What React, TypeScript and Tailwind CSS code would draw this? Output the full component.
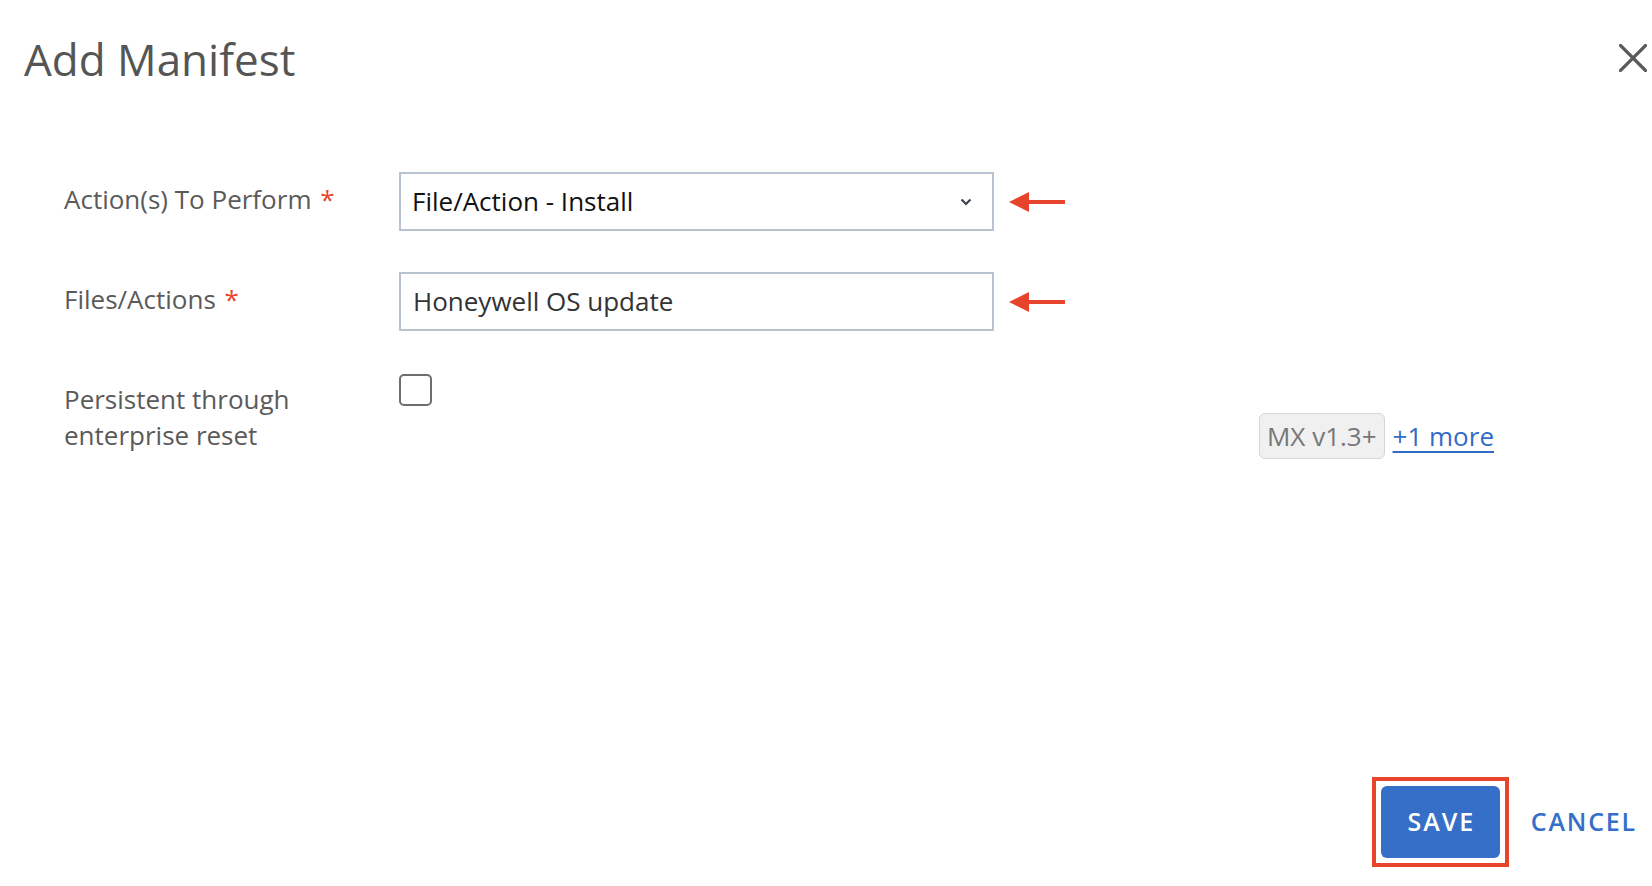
import React from "react";

function RedArrow() {
  return (
    <svg width="56" height="20" viewBox="0 0 56 20" className="shrink-0">
      <polygon points="0,10 20,0 20,20" fill="#e8432b" />
      <rect x="18" y="8" width="38" height="4" fill="#e8432b" />
    </svg>
  );
}

export default function App() {
  return (
    <div
      className="relative flex h-[886px] w-[1652px] flex-col overflow-hidden bg-white"
      style={{ fontFamily: '"Open Sans", "Noto Sans", sans-serif' }}
    >
      {/* Header */}
      <div className="flex items-start justify-between pl-[24px] pr-[5px] pt-[29px]">
        <h1 className="text-[44px] leading-[60px] font-normal text-[#555555]">Add Manifest</h1>
        <button className="mt-[15px] flex h-[28px] w-[28px] items-center justify-center" aria-label="Close">
          <svg width="28" height="28" viewBox="0 0 28 28">
            <path d="M1.5 1.5 L26.5 26.5 M26.5 1.5 L1.5 26.5" stroke="#5a5a5a" strokeWidth="3.2" strokeLinecap="square" />
          </svg>
        </button>
      </div>

      {/* Form */}
      <div className="mt-[83px] flex flex-col pl-[64px]">
        {/* Row 1 */}
        <div className="flex items-center">
          <div className="w-[335px] pb-[5px] text-[26px] leading-[36px] text-[#5a5a5a]">
            Action(s) To Perform <span className="ml-[2px] text-[#e8432b]">*</span>
          </div>
          <div className="flex h-[59px] w-[595px] items-center justify-between border-2 border-[#b9c3cf] pl-[11px] pr-[20px]">
            <span className="text-[26px] text-[#111111]">File/Action - Install</span>
            <svg width="12" height="8" viewBox="0 0 12 8">
              <path d="M1.5 1.5 L6 6 L10.5 1.5" stroke="#3d4450" strokeWidth="2.2" fill="none" />
            </svg>
          </div>
          <div className="ml-[15px]">
            <RedArrow />
          </div>
        </div>

        {/* Row 2 */}
        <div className="mt-[41px] flex items-center">
          <div className="w-[335px] pb-[5px] text-[26px] leading-[36px] text-[#5a5a5a]">
            Files/Actions <span className="ml-[2px] text-[#e8432b]">*</span>
          </div>
          <div className="flex h-[59px] w-[595px] items-center border-2 border-[#b9c3cf] pl-[12px]">
            <span className="text-[26px] text-[#333333]">Honeywell OS update</span>
          </div>
          <div className="ml-[15px]">
            <RedArrow />
          </div>
        </div>

        {/* Row 3 */}
        <div className="mt-[43px] flex items-start">
          <div className="mt-[7px] w-[335px] text-[26px] leading-[36px] text-[#5a5a5a]">
            Persistent through
            <br />
            enterprise reset
          </div>
          <div className="h-[32px] w-[33px] rounded-[5px] border-2 border-[#6e6e6e]" />
          <div className="ml-auto mr-[158px] mt-[39px] flex items-center gap-[8px]">
            <span className="rounded-[6px] border border-[#d6d6d6] bg-[#f0f0f0] px-[7px] text-[26px] leading-[44px] text-[#777777]">
              MX v1.3+
            </span>
            <a href="#" className="text-[26px] leading-[44px] text-[#2f6cc6] underline underline-offset-[5px]">
              +1 more
            </a>
          </div>
        </div>
      </div>

      {/* Footer */}
      <div className="mt-auto flex items-center justify-end pb-[19px] pr-[15px]">
        <div className="border-[4px] border-[#e8432b] p-[5px]">
          <button className="flex h-[72px] w-[119px] items-center justify-center rounded-[6px] bg-[#356fc7] pl-[2px] text-[25px] font-[550] tracking-[2px] text-white">
            SAVE
          </button>
        </div>
        <button className="ml-[22px] text-[25px] font-[550] tracking-[1.8px] text-[#356fc7]">CANCEL</button>
      </div>
    </div>
  );
}
